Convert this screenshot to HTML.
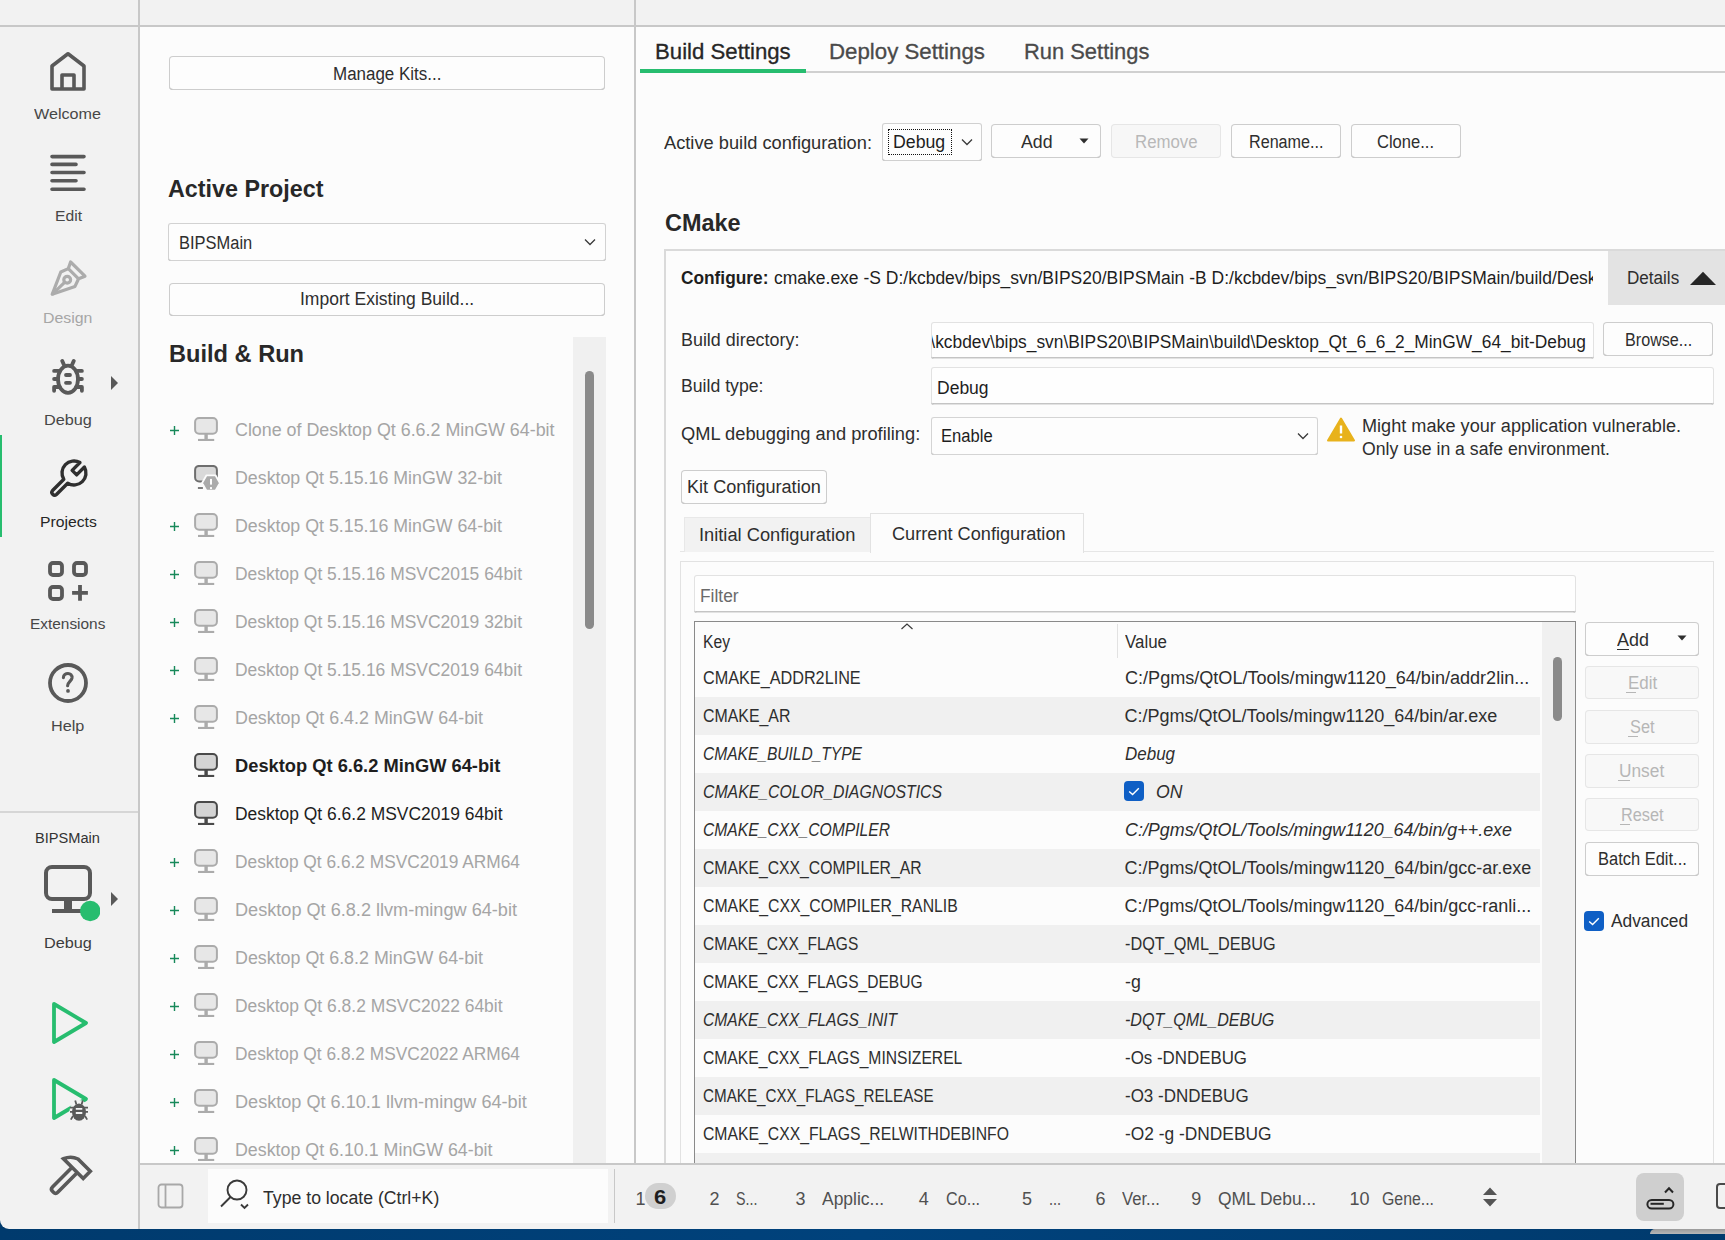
<!DOCTYPE html><html><head><meta charset="utf-8"><style>
html,body{margin:0;padding:0;width:1725px;height:1240px;overflow:hidden;background:#f2f2f2;font-family:"Liberation Sans", sans-serif;}
.t{position:absolute;white-space:pre;line-height:1;}
.r{position:absolute;box-sizing:border-box;}
</style></head><body>
<div class="r" style="left:0px;top:0px;width:1725px;height:1240px;background:#f2f2f2;"></div>
<div class="r" style="left:140px;top:27px;width:494px;height:1136px;background:#fcfcfc;"></div>
<div class="r" style="left:636px;top:27px;width:1089px;height:1136px;background:#fcfcfc;"></div>
<div class="r" style="left:0px;top:25px;width:1725px;height:2px;background:#c8c8c8;"></div>
<div class="r" style="left:138px;top:0px;width:2px;height:1229px;background:#c8c8c8;"></div>
<div class="r" style="left:634px;top:0px;width:2px;height:1163px;background:#c8c8c8;"></div>
<div class="r" style="left:140px;top:1163px;width:1585px;height:2px;background:#c8c8c8;"></div>
<div class="r" style="left:0px;top:1229px;width:1725px;height:11px;background:linear-gradient(90deg,#003a6d,#00427c 50%,#003a6d);"></div>
<div class="r" style="left:0px;top:1218px;width:10px;height:11px;background:#003a6d;"></div>
<div class="r" style="left:0px;top:1210px;width:10px;height:19px;background:#f2f2f2;border-bottom-left-radius:9px;"></div>
<div class="r" style="left:0px;top:811px;width:138px;height:2px;background:#d6d6d6;"></div>
<div class="r" style="left:0px;top:435px;width:2px;height:102px;background:#27bd6f;"></div>
<svg class="r" style="left:40px;top:45px" width="56" height="56" viewBox="0 0 56 56"><g fill="none" stroke="#595959" stroke-width="3.6" stroke-linejoin="round"><path d="M12,21 L28,8.8 L44,21 V44 H12 Z"/><path d="M22,44 V30 H34 V44"/></g></svg>
<div class="t" style="left:34.30px;top:105.58px;font-size:15.5px;color:#474747;transform:scaleX(1.0415);transform-origin:0 0;">Welcome</div>
<svg class="r" style="left:40px;top:145px" width="56" height="56" viewBox="0 0 56 56"><g stroke="#595959" stroke-width="3.6" stroke-linecap="round"><path d="M12,11.6 H44 M12,19.4 H36 M12,27.5 H44 M12,35.7 H36 M12,44.2 H44"/></g></svg>
<div class="t" style="left:54.70px;top:208.38px;font-size:15.5px;color:#474747;transform:scaleX(1.0105);transform-origin:0 0;">Edit</div>
<svg class="r" style="left:40px;top:250px" width="56" height="56" viewBox="0 0 56 56"><g fill="none" stroke="#acacac" stroke-width="3.2" stroke-linejoin="round"><path d="M12.2,44.3 L20.8,22 L28.3,18.6 L30.6,12 L45,26.2 L38.6,28.8 L35,36.4 Z"/><path d="M28.3,18.6 L38.6,28.8"/><circle cx="27.2" cy="29.8" r="3.4"/><path d="M12.2,44.3 L24.6,32.4"/></g></svg>
<div class="t" style="left:43.40px;top:310.48px;font-size:15.5px;color:#a6a6a6;transform:scaleX(1.0238);transform-origin:0 0;">Design</div>
<svg class="r" style="left:40px;top:348px" width="56" height="56" viewBox="0 0 56 56"><g fill="none" stroke="#595959" stroke-width="3.8" stroke-linecap="round" stroke-linejoin="round"><ellipse cx="28" cy="31.2" rx="10" ry="13.6"/><path d="M26,27 H30 M26,34.8 H30"/><path d="M18.5,22.9 H14.1 M37.5,22.9 H41.9 M18,31 H14.1 M38,31 H41.9 M19.5,39 H14.1 V42.8 M36.5,39 H41.9 V42.8 M24.5,18 L22.2,12.9 M31.5,18 L33.8,12.9"/></g></svg>
<svg class="r" style="left:108px;top:374px" width="14" height="18" viewBox="0 0 14 18"><path d="M3,2 L10,9 L3,16 Z" fill="#595959"/></svg>
<div class="t" style="left:43.75px;top:412.48px;font-size:15.5px;color:#474747;transform:scaleX(1.0484);transform-origin:0 0;">Debug</div>
<svg class="r" style="left:40px;top:448px" width="56" height="56" viewBox="0 0 56 56"><path d="M39.93,14.57 L32.15,22.35 L36.65,26.85 L44.43,19.07 A12,12 0 0 1 27.68,35.2 L16.44,46.44 A2.75,2.75 0 0 1 12.56,42.56 L23.8,31.32 A12,12 0 0 1 39.93,14.57 Z" fill="none" stroke="#2f2f2f" stroke-width="3.4" stroke-linejoin="round"/></svg>
<div class="t" style="left:39.70px;top:514.18px;font-size:15.5px;color:#262626;transform:scaleX(1.0143);transform-origin:0 0;">Projects</div>
<svg class="r" style="left:40px;top:550px" width="56" height="56" viewBox="0 0 56 56"><g fill="none" stroke="#595959" stroke-width="3.8"><rect x="10" y="13" width="12" height="12" rx="3"/><rect x="34" y="13" width="12" height="12" rx="3"/><rect x="10" y="37" width="12" height="12" rx="3"/><path d="M40,35 V50.8 M32.1,42.9 H47.9"/></g></svg>
<div class="t" style="left:30.40px;top:616.18px;font-size:15.5px;color:#474747;transform:scaleX(0.9944);transform-origin:0 0;">Extensions</div>
<svg class="r" style="left:40px;top:655px" width="56" height="56" viewBox="0 0 56 56"><g fill="none" stroke="#595959" stroke-width="3.8" stroke-linecap="round"><circle cx="28" cy="28" r="18"/><path d="M23.4,22.6 C23.6,17.2 32.6,17 32,23 C31.6,26 27.6,27.2 27.6,30.8" stroke-width="3.1"/></g><circle cx="28" cy="35.9" r="1.9" fill="#595959"/></svg>
<div class="t" style="left:51.20px;top:718.28px;font-size:15.5px;color:#474747;transform:scaleX(1.0473);transform-origin:0 0;">Help</div>
<div class="t" style="left:35.30px;top:830.28px;font-size:15.5px;color:#333333;transform:scaleX(0.9431);transform-origin:0 0;">BIPSMain</div>
<svg class="r" style="left:36px;top:858px" width="64" height="64" viewBox="0 0 64 64"><g fill="none" stroke="#595959" stroke-width="4"><rect x="10" y="9" width="44" height="32" rx="6"/></g><rect x="28" y="40" width="8" height="13" fill="#595959"/><rect x="16" y="51" width="34" height="4" fill="#595959"/><circle cx="54.2" cy="53" r="10.2" fill="#27bd6f"/></svg>
<svg class="r" style="left:108px;top:890px" width="14" height="18" viewBox="0 0 14 18"><path d="M3,2 L10,9 L3,16 Z" fill="#595959"/></svg>
<div class="t" style="left:43.75px;top:934.58px;font-size:15.5px;color:#3c3c3c;transform:scaleX(1.0484);transform-origin:0 0;">Debug</div>
<svg class="r" style="left:40px;top:995px" width="56" height="56" viewBox="0 0 56 56"><path d="M14,9 L46,28 L14,47 Z" fill="none" stroke="#27bd6f" stroke-width="3.8" stroke-linejoin="round"/></svg>
<svg class="r" style="left:40px;top:1072px" width="56" height="56" viewBox="0 0 56 56"><path d="M14,8 L46,27 L14,46 Z" fill="none" stroke="#27bd6f" stroke-width="3.8" stroke-linejoin="round"/><ellipse cx="39" cy="39.6" rx="9.6" ry="11.6" fill="#f2f2f2"/><ellipse cx="39" cy="40.1" rx="7" ry="8.7" fill="#595959"/><g stroke="#595959" stroke-width="1.8" fill="none"><path d="M30,35.7 H48 M30,39.8 H48 M33,44 L30.8,47.6 M45,44 L47.2,47.6 M36.4,32.5 L35.2,28.5 M41.6,32.5 L42.8,28.5"/></g><path d="M35.8,36.9 H42.3 M35.8,41 H42.3" stroke="#f2f2f2" stroke-width="1.8"/></svg>
<svg class="r" style="left:40px;top:1148px" width="56" height="56" viewBox="0 0 56 56"><g fill="none" stroke="#595959" stroke-width="3.6" stroke-linejoin="miter"><path d="M23.55,10.75 Q31,7.6 38,11 L50.3,23.3 L43.2,30.4 Z"/><path d="M32.15,19.35 L12.5,39 Q10.35,41.15 12.5,43.3 L13.45,44.25 Q15.6,46.4 17.75,44.25 L37.4,24.6"/></g></svg>
<div class="r" style="left:169px;top:56px;width:436px;height:34px;background:#fdfdfd;box-shadow:inset 0 0 0 1px #cdcdcd, inset 0 -1px 0 0 #a9a9a9;border-radius:4px;"></div>
<div class="t" style="left:332.80px;top:64.66px;font-size:18px;color:#2e2e2e;transform:scaleX(0.9421);transform-origin:0 0;">Manage Kits...</div>
<div class="t" style="left:168.40px;top:177.08px;font-size:24px;color:#282828;font-weight:700;transform:scaleX(0.9714);transform-origin:0 0;">Active Project</div>
<div class="r" style="left:168px;top:223px;width:438px;height:38px;background:#fdfdfd;box-shadow:inset 0 0 0 1px #d2d2d2, inset 0 -1px 0 0 #a8a8a8;border-radius:3px;"></div>
<div class="t" style="left:178.70px;top:233.76px;font-size:18px;color:#2e2e2e;transform:scaleX(0.9145);transform-origin:0 0;">BIPSMain</div>
<svg class="r" style="left:582px;top:234px" width="16" height="16" viewBox="0 0 16 16"><path d="M3,5.5 L8,10.5 L13,5.5" fill="none" stroke="#3a3a3a" stroke-width="1.3"/></svg>
<div class="r" style="left:169px;top:283px;width:436px;height:33px;background:#fdfdfd;box-shadow:inset 0 0 0 1px #cdcdcd, inset 0 -1px 0 0 #a9a9a9;border-radius:4px;"></div>
<div class="t" style="left:299.90px;top:290.46px;font-size:18px;color:#2e2e2e;transform:scaleX(0.9728);transform-origin:0 0;">Import Existing Build...</div>
<div class="t" style="left:168.80px;top:342.48px;font-size:24px;color:#282828;font-weight:700;transform:scaleX(0.9832);transform-origin:0 0;">Build &amp; Run</div>
<div class="r" style="left:573px;top:337px;width:33px;height:826px;background:#f0f0f0;"></div>
<div class="r" style="left:585px;top:371px;width:9px;height:258px;background:#8a8a8a;border-radius:4.5px;"></div>
<svg class="r" style="left:169px;top:425px" width="11" height="11" viewBox="0 0 11 11"><path d="M5.5,1 V10 M1,5.5 H10" stroke="#17895a" stroke-width="1.4"/></svg>
<svg class="r" style="left:193px;top:417px" width="30" height="28" viewBox="0 0 30 28"><rect x="2.1" y="1.1" width="21.8" height="15.6" rx="4" fill="#e7e7e7" stroke="#ababab" stroke-width="2"/><rect x="11.4" y="16.6" width="3.4" height="5.4" fill="#ababab"/><rect x="5" y="21.9" width="16.2" height="2.1" fill="#ababab"/></svg>
<div class="t" style="left:234.50px;top:421.36px;font-size:18px;color:#a5a5a5;transform:scaleX(0.9918);transform-origin:0 0;">Clone of Desktop Qt 6.6.2 MinGW 64-bit</div>
<svg class="r" style="left:193px;top:465px" width="30" height="28" viewBox="0 0 30 28"><rect x="2.1" y="0.9" width="21.8" height="15.6" rx="4" fill="#d9d9d9" stroke="#6e6e6e" stroke-width="2"/><rect x="4.9" y="22.1" width="5" height="1.8" fill="#6e6e6e"/><path d="M13.5,10.3 L22.5,10.3 L26.9,18 L22.5,25.6 L13.5,25.6 L9.1,18 Z" fill="#ababab" stroke="#fcfcfc" stroke-width="1.8" stroke-linejoin="round"/><rect x="17" y="13.9" width="2" height="5.7" fill="#fcfcfc"/><rect x="17" y="22.1" width="2" height="2" fill="#fcfcfc"/></svg>
<div class="t" style="left:234.50px;top:469.36px;font-size:18px;color:#a5a5a5;transform:scaleX(0.9884);transform-origin:0 0;">Desktop Qt 5.15.16 MinGW 32-bit</div>
<svg class="r" style="left:169px;top:521px" width="11" height="11" viewBox="0 0 11 11"><path d="M5.5,1 V10 M1,5.5 H10" stroke="#17895a" stroke-width="1.4"/></svg>
<svg class="r" style="left:193px;top:513px" width="30" height="28" viewBox="0 0 30 28"><rect x="2.1" y="1.1" width="21.8" height="15.6" rx="4" fill="#e7e7e7" stroke="#ababab" stroke-width="2"/><rect x="11.4" y="16.6" width="3.4" height="5.4" fill="#ababab"/><rect x="5" y="21.9" width="16.2" height="2.1" fill="#ababab"/></svg>
<div class="t" style="left:234.50px;top:517.36px;font-size:18px;color:#a5a5a5;transform:scaleX(0.9884);transform-origin:0 0;">Desktop Qt 5.15.16 MinGW 64-bit</div>
<svg class="r" style="left:169px;top:569px" width="11" height="11" viewBox="0 0 11 11"><path d="M5.5,1 V10 M1,5.5 H10" stroke="#17895a" stroke-width="1.4"/></svg>
<svg class="r" style="left:193px;top:561px" width="30" height="28" viewBox="0 0 30 28"><rect x="2.1" y="1.1" width="21.8" height="15.6" rx="4" fill="#e7e7e7" stroke="#ababab" stroke-width="2"/><rect x="11.4" y="16.6" width="3.4" height="5.4" fill="#ababab"/><rect x="5" y="21.9" width="16.2" height="2.1" fill="#ababab"/></svg>
<div class="t" style="left:234.50px;top:565.36px;font-size:18px;color:#a5a5a5;transform:scaleX(0.9690);transform-origin:0 0;">Desktop Qt 5.15.16 MSVC2015 64bit</div>
<svg class="r" style="left:169px;top:617px" width="11" height="11" viewBox="0 0 11 11"><path d="M5.5,1 V10 M1,5.5 H10" stroke="#17895a" stroke-width="1.4"/></svg>
<svg class="r" style="left:193px;top:609px" width="30" height="28" viewBox="0 0 30 28"><rect x="2.1" y="1.1" width="21.8" height="15.6" rx="4" fill="#e7e7e7" stroke="#ababab" stroke-width="2"/><rect x="11.4" y="16.6" width="3.4" height="5.4" fill="#ababab"/><rect x="5" y="21.9" width="16.2" height="2.1" fill="#ababab"/></svg>
<div class="t" style="left:234.50px;top:613.36px;font-size:18px;color:#a5a5a5;transform:scaleX(0.9690);transform-origin:0 0;">Desktop Qt 5.15.16 MSVC2019 32bit</div>
<svg class="r" style="left:169px;top:665px" width="11" height="11" viewBox="0 0 11 11"><path d="M5.5,1 V10 M1,5.5 H10" stroke="#17895a" stroke-width="1.4"/></svg>
<svg class="r" style="left:193px;top:657px" width="30" height="28" viewBox="0 0 30 28"><rect x="2.1" y="1.1" width="21.8" height="15.6" rx="4" fill="#e7e7e7" stroke="#ababab" stroke-width="2"/><rect x="11.4" y="16.6" width="3.4" height="5.4" fill="#ababab"/><rect x="5" y="21.9" width="16.2" height="2.1" fill="#ababab"/></svg>
<div class="t" style="left:234.50px;top:661.36px;font-size:18px;color:#a5a5a5;transform:scaleX(0.9690);transform-origin:0 0;">Desktop Qt 5.15.16 MSVC2019 64bit</div>
<svg class="r" style="left:169px;top:713px" width="11" height="11" viewBox="0 0 11 11"><path d="M5.5,1 V10 M1,5.5 H10" stroke="#17895a" stroke-width="1.4"/></svg>
<svg class="r" style="left:193px;top:705px" width="30" height="28" viewBox="0 0 30 28"><rect x="2.1" y="1.1" width="21.8" height="15.6" rx="4" fill="#e7e7e7" stroke="#ababab" stroke-width="2"/><rect x="11.4" y="16.6" width="3.4" height="5.4" fill="#ababab"/><rect x="5" y="21.9" width="16.2" height="2.1" fill="#ababab"/></svg>
<div class="t" style="left:234.50px;top:709.36px;font-size:18px;color:#a5a5a5;transform:scaleX(0.9916);transform-origin:0 0;">Desktop Qt 6.4.2 MinGW 64-bit</div>
<svg class="r" style="left:193px;top:753px" width="30" height="28" viewBox="0 0 30 28"><rect x="2.1" y="1.1" width="21.8" height="15.6" rx="4" fill="#d4d4d4" stroke="#4a4a4a" stroke-width="2"/><rect x="11.4" y="16.6" width="3.4" height="5.4" fill="#4a4a4a"/><rect x="5" y="21.9" width="16.2" height="2.1" fill="#4a4a4a"/></svg>
<div class="t" style="left:234.50px;top:757.36px;font-size:18px;color:#1e1e1e;font-weight:700;transform:scaleX(1.0163);transform-origin:0 0;">Desktop Qt 6.6.2 MinGW 64-bit</div>
<svg class="r" style="left:193px;top:801px" width="30" height="28" viewBox="0 0 30 28"><rect x="2.1" y="1.1" width="21.8" height="15.6" rx="4" fill="#d4d4d4" stroke="#4a4a4a" stroke-width="2"/><rect x="11.4" y="16.6" width="3.4" height="5.4" fill="#4a4a4a"/><rect x="5" y="21.9" width="16.2" height="2.1" fill="#4a4a4a"/></svg>
<div class="t" style="left:234.50px;top:805.36px;font-size:18px;color:#1e1e1e;transform:scaleX(0.9687);transform-origin:0 0;">Desktop Qt 6.6.2 MSVC2019 64bit</div>
<svg class="r" style="left:169px;top:857px" width="11" height="11" viewBox="0 0 11 11"><path d="M5.5,1 V10 M1,5.5 H10" stroke="#17895a" stroke-width="1.4"/></svg>
<svg class="r" style="left:193px;top:849px" width="30" height="28" viewBox="0 0 30 28"><rect x="2.1" y="1.1" width="21.8" height="15.6" rx="4" fill="#e7e7e7" stroke="#ababab" stroke-width="2"/><rect x="11.4" y="16.6" width="3.4" height="5.4" fill="#ababab"/><rect x="5" y="21.9" width="16.2" height="2.1" fill="#ababab"/></svg>
<div class="t" style="left:234.50px;top:853.36px;font-size:18px;color:#a5a5a5;transform:scaleX(0.9623);transform-origin:0 0;">Desktop Qt 6.6.2 MSVC2019 ARM64</div>
<svg class="r" style="left:169px;top:905px" width="11" height="11" viewBox="0 0 11 11"><path d="M5.5,1 V10 M1,5.5 H10" stroke="#17895a" stroke-width="1.4"/></svg>
<svg class="r" style="left:193px;top:897px" width="30" height="28" viewBox="0 0 30 28"><rect x="2.1" y="1.1" width="21.8" height="15.6" rx="4" fill="#e7e7e7" stroke="#ababab" stroke-width="2"/><rect x="11.4" y="16.6" width="3.4" height="5.4" fill="#ababab"/><rect x="5" y="21.9" width="16.2" height="2.1" fill="#ababab"/></svg>
<div class="t" style="left:234.50px;top:901.36px;font-size:18px;color:#a5a5a5;transform:scaleX(1.0067);transform-origin:0 0;">Desktop Qt 6.8.2 llvm-mingw 64-bit</div>
<svg class="r" style="left:169px;top:953px" width="11" height="11" viewBox="0 0 11 11"><path d="M5.5,1 V10 M1,5.5 H10" stroke="#17895a" stroke-width="1.4"/></svg>
<svg class="r" style="left:193px;top:945px" width="30" height="28" viewBox="0 0 30 28"><rect x="2.1" y="1.1" width="21.8" height="15.6" rx="4" fill="#e7e7e7" stroke="#ababab" stroke-width="2"/><rect x="11.4" y="16.6" width="3.4" height="5.4" fill="#ababab"/><rect x="5" y="21.9" width="16.2" height="2.1" fill="#ababab"/></svg>
<div class="t" style="left:234.50px;top:949.36px;font-size:18px;color:#a5a5a5;transform:scaleX(0.9916);transform-origin:0 0;">Desktop Qt 6.8.2 MinGW 64-bit</div>
<svg class="r" style="left:169px;top:1001px" width="11" height="11" viewBox="0 0 11 11"><path d="M5.5,1 V10 M1,5.5 H10" stroke="#17895a" stroke-width="1.4"/></svg>
<svg class="r" style="left:193px;top:993px" width="30" height="28" viewBox="0 0 30 28"><rect x="2.1" y="1.1" width="21.8" height="15.6" rx="4" fill="#e7e7e7" stroke="#ababab" stroke-width="2"/><rect x="11.4" y="16.6" width="3.4" height="5.4" fill="#ababab"/><rect x="5" y="21.9" width="16.2" height="2.1" fill="#ababab"/></svg>
<div class="t" style="left:234.50px;top:997.36px;font-size:18px;color:#a5a5a5;transform:scaleX(0.9687);transform-origin:0 0;">Desktop Qt 6.8.2 MSVC2022 64bit</div>
<svg class="r" style="left:169px;top:1049px" width="11" height="11" viewBox="0 0 11 11"><path d="M5.5,1 V10 M1,5.5 H10" stroke="#17895a" stroke-width="1.4"/></svg>
<svg class="r" style="left:193px;top:1041px" width="30" height="28" viewBox="0 0 30 28"><rect x="2.1" y="1.1" width="21.8" height="15.6" rx="4" fill="#e7e7e7" stroke="#ababab" stroke-width="2"/><rect x="11.4" y="16.6" width="3.4" height="5.4" fill="#ababab"/><rect x="5" y="21.9" width="16.2" height="2.1" fill="#ababab"/></svg>
<div class="t" style="left:234.50px;top:1045.36px;font-size:18px;color:#a5a5a5;transform:scaleX(0.9623);transform-origin:0 0;">Desktop Qt 6.8.2 MSVC2022 ARM64</div>
<svg class="r" style="left:169px;top:1097px" width="11" height="11" viewBox="0 0 11 11"><path d="M5.5,1 V10 M1,5.5 H10" stroke="#17895a" stroke-width="1.4"/></svg>
<svg class="r" style="left:193px;top:1089px" width="30" height="28" viewBox="0 0 30 28"><rect x="2.1" y="1.1" width="21.8" height="15.6" rx="4" fill="#e7e7e7" stroke="#ababab" stroke-width="2"/><rect x="11.4" y="16.6" width="3.4" height="5.4" fill="#ababab"/><rect x="5" y="21.9" width="16.2" height="2.1" fill="#ababab"/></svg>
<div class="t" style="left:234.50px;top:1093.36px;font-size:18px;color:#a5a5a5;transform:scaleX(1.0055);transform-origin:0 0;">Desktop Qt 6.10.1 llvm-mingw 64-bit</div>
<svg class="r" style="left:169px;top:1145px" width="11" height="11" viewBox="0 0 11 11"><path d="M5.5,1 V10 M1,5.5 H10" stroke="#17895a" stroke-width="1.4"/></svg>
<svg class="r" style="left:193px;top:1137px" width="30" height="28" viewBox="0 0 30 28"><rect x="2.1" y="1.1" width="21.8" height="15.6" rx="4" fill="#e7e7e7" stroke="#ababab" stroke-width="2"/><rect x="11.4" y="16.6" width="3.4" height="5.4" fill="#ababab"/><rect x="5" y="21.9" width="16.2" height="2.1" fill="#ababab"/></svg>
<div class="t" style="left:234.50px;top:1141.36px;font-size:18px;color:#a5a5a5;transform:scaleX(0.9900);transform-origin:0 0;">Desktop Qt 6.10.1 MinGW 64-bit</div>
<div class="r" style="left:140px;top:1165px;width:1585px;height:64px;background:#f2f2f2;"></div>
<svg class="r" style="left:156px;top:1182px" width="30" height="28" viewBox="0 0 30 28"><rect x="2.5" y="2.5" width="24" height="23" rx="3" fill="none" stroke="#a8a8a8" stroke-width="1.8"/><path d="M9.5,2.5 V25.5" stroke="#a8a8a8" stroke-width="1.8"/></svg>
<div class="r" style="left:208px;top:1169px;width:400px;height:54px;background:#fcfcfc;"></div>
<svg class="r" style="left:218px;top:1178px" width="36" height="36" viewBox="0 0 36 36"><g fill="none" stroke="#3a3a3a" stroke-width="1.9"><circle cx="19" cy="12" r="9.5"/><path d="M12.5,19 L3,28.5"/><path d="M23,26.5 L26.5,30 L30,26.5"/></g></svg>
<div class="t" style="left:262.70px;top:1189.16px;font-size:18px;color:#2e2e2e;transform:scaleX(0.9817);transform-origin:0 0;">Type to locate (Ctrl+K)</div>
<div class="r" style="left:614px;top:1169px;width:1px;height:54px;background:#c8c8c8;"></div>
<div class="t" style="left:635.40px;top:1189.56px;font-size:18px;color:#505050;">1</div>
<div class="r" style="left:645px;top:1183px;width:31px;height:26px;background:#d0d0d0;border-radius:13px;"></div>
<div class="t" style="left:654.10px;top:1187.27px;font-size:20px;color:#1e1e1e;font-weight:700;transform:scaleX(1.0966);transform-origin:0 0;">6</div>
<div class="t" style="left:709.50px;top:1189.56px;font-size:18px;color:#505050;">2</div>
<div class="t" style="left:736.30px;top:1189.56px;font-size:18px;color:#505050;transform:scaleX(0.7921);transform-origin:0 0;">S...</div>
<div class="t" style="left:795.40px;top:1189.56px;font-size:18px;color:#505050;">3</div>
<div class="t" style="left:822.20px;top:1189.56px;font-size:18px;color:#505050;transform:scaleX(0.9698);transform-origin:0 0;">Applic...</div>
<div class="t" style="left:918.80px;top:1189.56px;font-size:18px;color:#505050;">4</div>
<div class="t" style="left:946.00px;top:1189.56px;font-size:18px;color:#505050;transform:scaleX(0.8970);transform-origin:0 0;">Co...</div>
<div class="t" style="left:1021.90px;top:1189.56px;font-size:18px;color:#505050;">5</div>
<div class="t" style="left:1048.50px;top:1189.56px;font-size:18px;color:#505050;transform:scaleX(0.8058);transform-origin:0 0;">...</div>
<div class="t" style="left:1095.50px;top:1189.56px;font-size:18px;color:#505050;">6</div>
<div class="t" style="left:1122.20px;top:1189.56px;font-size:18px;color:#505050;transform:scaleX(0.9237);transform-origin:0 0;">Ver...</div>
<div class="t" style="left:1191.30px;top:1189.56px;font-size:18px;color:#505050;">9</div>
<div class="t" style="left:1218.00px;top:1189.56px;font-size:18px;color:#505050;transform:scaleX(0.9677);transform-origin:0 0;">QML Debu...</div>
<div class="t" style="left:1349.40px;top:1189.56px;font-size:18px;color:#505050;">10</div>
<div class="t" style="left:1382.30px;top:1189.56px;font-size:18px;color:#505050;transform:scaleX(0.8807);transform-origin:0 0;">Gene...</div>
<svg class="r" style="left:1480px;top:1185px" width="20" height="24" viewBox="0 0 20 24"><path d="M3,10 L10,2.5 L17,10 Z M3,14 L10,21.5 L17,14 Z" fill="#555"/></svg>
<div class="r" style="left:1636px;top:1173px;width:48px;height:48px;background:#cfcfcf;border-radius:8px;"></div>
<svg class="r" style="left:1640px;top:1177px" width="40" height="40" viewBox="0 0 40 40"><g fill="none" stroke="#262626" stroke-width="2"><rect x="7.4" y="23" width="26" height="8.6" rx="4.3"/><path d="M25,15.5 L29,11.2 L33,15.5"/></g><path d="M10.5,26.8 H23.8" stroke="#262626" stroke-width="2"/></svg>
<div class="r" style="left:1650px;top:1229px;width:75px;height:5px;background:linear-gradient(180deg,#9a9a9a,#b8b8b8);border-top-left-radius:5px;"></div>
<div class="r" style="left:1716px;top:1183px;width:14px;height:26px;box-shadow:inset 0 0 0 1px #4a4a4a;border-radius:4px;box-shadow:inset 0 0 0 2px #4a4a4a;"></div>
<div class="t" style="left:655.00px;top:40.58px;font-size:22px;color:#262626;transform:scaleX(1.0087);transform-origin:0 0;-webkit-text-stroke:0.3px currentColor;">Build Settings</div>
<div class="t" style="left:829.30px;top:40.58px;font-size:22px;color:#4a4a4a;transform:scaleX(1.0117);transform-origin:0 0;-webkit-text-stroke:0.3px currentColor;">Deploy Settings</div>
<div class="t" style="left:1023.50px;top:40.58px;font-size:22px;color:#4a4a4a;transform:scaleX(0.9955);transform-origin:0 0;-webkit-text-stroke:0.3px currentColor;">Run Settings</div>
<div class="r" style="left:806px;top:71px;width:919px;height:2px;background:#d0d0d0;"></div>
<div class="r" style="left:640px;top:69px;width:166px;height:4px;background:#27bd6f;"></div>
<div class="t" style="left:664.00px;top:134.36px;font-size:18px;color:#2e2e2e;transform:scaleX(1.0140);transform-origin:0 0;">Active build configuration:</div>
<div class="r" style="left:882px;top:123px;width:100px;height:38px;background:#fdfdfd;box-shadow:inset 0 0 0 1px #d0d0d0, inset 0 -1px 0 0 #a8a8a8;border-radius:3px;"></div>
<div class="r" style="left:888px;top:129px;width:64px;height:26px;border:1px dotted #111;"></div>
<div class="t" style="left:892.50px;top:133.16px;font-size:18px;color:#1e1e1e;transform:scaleX(0.9840);transform-origin:0 0;">Debug</div>
<svg class="r" style="left:959px;top:134px" width="16" height="16" viewBox="0 0 16 16"><path d="M3,5.5 L8,10.5 L13,5.5" fill="none" stroke="#3a3a3a" stroke-width="1.3"/></svg>
<div class="r" style="left:991px;top:124px;width:110px;height:34px;background:#fdfdfd;box-shadow:inset 0 0 0 1px #cdcdcd, inset 0 -1px 0 0 #a9a9a9;border-radius:4px;"></div>
<div class="t" style="left:1020.90px;top:132.76px;font-size:18px;color:#2e2e2e;transform:scaleX(0.9865);transform-origin:0 0;">Add</div>
<svg class="r" style="left:1077px;top:135px" width="14" height="12" viewBox="0 0 14 12"><path d="M2.5,3.5 L11.5,3.5 L7,8.5 Z" fill="#2e2e2e"/></svg>
<div class="r" style="left:1111px;top:124px;width:110px;height:34px;background:#f7f7f7;box-shadow:inset 0 0 0 1px #e6e6e6;border-radius:4px;"></div>
<div class="t" style="left:1134.80px;top:132.76px;font-size:18px;color:#b8b8b8;transform:scaleX(0.9339);transform-origin:0 0;">Remove</div>
<div class="r" style="left:1231px;top:124px;width:110px;height:34px;background:#fdfdfd;box-shadow:inset 0 0 0 1px #cdcdcd, inset 0 -1px 0 0 #a9a9a9;border-radius:4px;"></div>
<div class="t" style="left:1249.00px;top:132.76px;font-size:18px;color:#2e2e2e;transform:scaleX(0.8971);transform-origin:0 0;">Rename...</div>
<div class="r" style="left:1351px;top:124px;width:110px;height:34px;background:#fdfdfd;box-shadow:inset 0 0 0 1px #cdcdcd, inset 0 -1px 0 0 #a9a9a9;border-radius:4px;"></div>
<div class="t" style="left:1377.40px;top:132.76px;font-size:18px;color:#2e2e2e;transform:scaleX(0.9187);transform-origin:0 0;">Clone...</div>
<div class="t" style="left:664.60px;top:212.03px;font-size:23px;color:#282828;font-weight:700;transform:scaleX(1.0195);transform-origin:0 0;">CMake</div>
<div class="r" style="left:664px;top:249px;width:1061px;height:914px;border-left:2px solid #dadada;border-top:2px solid #dadada;"></div>
<div class="r" style="left:1608px;top:251px;width:117px;height:54px;background:#e3e3e3;"></div>
<div class="t" style="left:1627.00px;top:268.66px;font-size:18px;color:#2e2e2e;transform:scaleX(0.9486);transform-origin:0 0;">Details</div>
<svg class="r" style="left:1688px;top:269px" width="30" height="18" viewBox="0 0 30 18"><path d="M2,16 L15,2.8 L28,16 Z" fill="#262626"/></svg>
<div class="r" style="left:680px;top:255px;width:913px;height:40px;overflow:hidden">
<div class="t" style="left:0.70px;top:14.26px;font-size:18px;color:#1e1e1e;font-weight:700;transform:scaleX(0.9606);transform-origin:0 0;">Configure:</div>
<div class="t" style="left:94.40px;top:14.26px;font-size:18px;color:#1e1e1e;transform:scaleX(0.9719);transform-origin:0 0;">cmake.exe -S D:/kcbdev/bips_svn/BIPS20/BIPSMain -B D:/kcbdev/bips_svn/BIPS20/BIPSMain/build/Desk</div>
</div>
<div class="t" style="left:680.70px;top:330.96px;font-size:18px;color:#2e2e2e;transform:scaleX(0.9944);transform-origin:0 0;">Build directory:</div>
<div class="r" style="left:931px;top:322px;width:663px;height:37px;background:#fefefe;box-shadow:inset 0 0 0 1px #e2e2e2, inset 0 -1.5px 0 0 #8a8a8a;border-radius:3px;"></div>
<div class="r" style="left:932px;top:322px;width:661px;height:36px;overflow:hidden">
<div class="t" style="left:-19.30px;top:10.86px;font-size:18px;color:#1e1e1e;transform:scaleX(0.9635);transform-origin:0 0;">D:\kcbdev\bips_svn\BIPS20\BIPSMain\build\Desktop_Qt_6_6_2_MinGW_64_bit-Debug</div>
</div>
<div class="r" style="left:1603px;top:322px;width:110px;height:34px;background:#fdfdfd;box-shadow:inset 0 0 0 1px #cdcdcd, inset 0 -1px 0 0 #a9a9a9;border-radius:4px;"></div>
<div class="t" style="left:1624.50px;top:330.56px;font-size:18px;color:#2e2e2e;transform:scaleX(0.8970);transform-origin:0 0;">Browse...</div>
<div class="t" style="left:680.70px;top:376.76px;font-size:18px;color:#2e2e2e;transform:scaleX(0.9814);transform-origin:0 0;">Build type:</div>
<div class="r" style="left:931px;top:367px;width:783px;height:38px;background:#fefefe;box-shadow:inset 0 0 0 1px #e2e2e2, inset 0 -1.5px 0 0 #8a8a8a;border-radius:3px;"></div>
<div class="t" style="left:936.90px;top:378.51px;font-size:18px;color:#1e1e1e;transform:scaleX(0.9727);transform-origin:0 0;">Debug</div>
<div class="t" style="left:680.60px;top:424.76px;font-size:18px;color:#2e2e2e;transform:scaleX(1.0161);transform-origin:0 0;">QML debugging and profiling:</div>
<div class="r" style="left:931px;top:417px;width:387px;height:38px;background:#fdfdfd;box-shadow:inset 0 0 0 1px #d4d4d4, inset 0 -1px 0 0 #a8a8a8;border-radius:3px;"></div>
<div class="t" style="left:940.60px;top:427.26px;font-size:18px;color:#1e1e1e;transform:scaleX(0.9222);transform-origin:0 0;">Enable</div>
<svg class="r" style="left:1295px;top:428px" width="16" height="16" viewBox="0 0 16 16"><path d="M3,5.5 L8,10.5 L13,5.5" fill="none" stroke="#3a3a3a" stroke-width="1.3"/></svg>
<svg class="r" style="left:1326px;top:416px" width="30" height="27" viewBox="0 0 30 27"><path d="M15,2.5 L28,24.5 L2,24.5 Z" fill="#e8b21c" stroke="#e8b21c" stroke-width="2" stroke-linejoin="round"/><path d="M15,9.5 V17.5" stroke="#fff" stroke-width="2.4"/><circle cx="15" cy="21" r="1.3" fill="#fff"/></svg>
<div class="t" style="left:1362.40px;top:417.16px;font-size:18px;color:#2e2e2e;transform:scaleX(1.0058);transform-origin:0 0;">Might make your application vulnerable.</div>
<div class="t" style="left:1362.40px;top:440.26px;font-size:18px;color:#2e2e2e;transform:scaleX(0.9797);transform-origin:0 0;">Only use in a safe environment.</div>
<div class="r" style="left:681px;top:470px;width:146px;height:34px;background:#fdfdfd;box-shadow:inset 0 0 0 1px #cdcdcd, inset 0 -1px 0 0 #a9a9a9;border-radius:4px;"></div>
<div class="t" style="left:687.00px;top:478.46px;font-size:18px;color:#2e2e2e;transform:scaleX(1.0054);transform-origin:0 0;">Kit Configuration</div>
<div class="r" style="left:680px;top:551px;width:1034px;height:1px;background:#e6e6e6;"></div>
<div class="r" style="left:684px;top:517px;width:187px;height:35px;background:#f2f2f2;box-shadow:inset 1px 0 0 0 #e8e8e8, inset 0 1px 0 0 #e8e8e8;"></div>
<div class="t" style="left:698.70px;top:525.76px;font-size:18px;color:#2e2e2e;transform:scaleX(1.0143);transform-origin:0 0;">Initial Configuration</div>
<div class="r" style="left:870px;top:513px;width:214px;height:40px;background:#fcfcfc;box-shadow:inset 1px 0 0 0 #e2e2e2, inset -1px 0 0 0 #e2e2e2, inset 0 1px 0 0 #e2e2e2;"></div>
<div class="t" style="left:892.40px;top:525.06px;font-size:18px;color:#2e2e2e;transform:scaleX(1.0088);transform-origin:0 0;">Current Configuration</div>
<div class="r" style="left:680px;top:561px;width:1034px;height:602px;background:#fcfcfc;box-shadow:inset 1px 0 0 0 #e2e2e2, inset -1px 0 0 0 #e2e2e2, inset 0 1px 0 0 #e2e2e2;"></div>
<div class="r" style="left:694px;top:575px;width:882px;height:38px;background:#fefefe;box-shadow:inset 0 0 0 1px #e2e2e2, inset 0 -1.5px 0 0 #8a8a8a;border-radius:3px;"></div>
<div class="t" style="left:700.40px;top:586.86px;font-size:18px;color:#6a6a6a;transform:scaleX(0.9650);transform-origin:0 0;">Filter</div>
<div class="r" style="left:694px;top:621px;width:882px;height:542px;background:#fcfcfc;box-shadow:inset 1px 0 0 0 #8a8a8a, inset 0 1px 0 0 #8a8a8a, inset -1px 0 0 0 #8a8a8a;"></div>
<div class="r" style="left:1541.5px;top:622px;width:33.5px;height:541px;background:#f0f0f0;"></div>
<div class="r" style="left:1553px;top:657px;width:9px;height:64px;background:#8a8a8a;border-radius:4.5px;"></div>
<div class="r" style="left:1117px;top:624px;width:1px;height:34px;background:#e2e2e2;"></div>
<svg class="r" style="left:899px;top:620px" width="16" height="12" viewBox="0 0 16 12"><path d="M2.5,9 L8,4 L13.5,9" fill="none" stroke="#3a3a3a" stroke-width="1.2"/></svg>
<div class="t" style="left:702.60px;top:632.96px;font-size:18px;color:#2e2e2e;transform:scaleX(0.8701);transform-origin:0 0;">Key</div>
<div class="t" style="left:1124.50px;top:632.96px;font-size:18px;color:#2e2e2e;transform:scaleX(0.9395);transform-origin:0 0;">Value</div>
<div class="r" style="left:695px;top:659px;width:845px;height:38px;background:#fcfcfc;"></div>
<div class="t" style="left:702.60px;top:668.76px;font-size:18px;color:#2e2e2e;transform:scaleX(0.9008);transform-origin:0 0;">CMAKE_ADDR2LINE</div>
<div class="t" style="left:1124.50px;top:668.76px;font-size:18px;color:#2e2e2e;transform:scaleX(1.0035);transform-origin:0 0;">C:/Pgms/QtOL/Tools/mingw1120_64/bin/addr2lin...</div>
<div class="r" style="left:695px;top:697px;width:845px;height:38px;background:#f0f0f0;"></div>
<div class="t" style="left:702.60px;top:706.76px;font-size:18px;color:#2e2e2e;transform:scaleX(0.8825);transform-origin:0 0;">CMAKE_AR</div>
<div class="t" style="left:1124.50px;top:706.76px;font-size:18px;color:#2e2e2e;">C:/Pgms/QtOL/Tools/mingw1120_64/bin/ar.exe</div>
<div class="r" style="left:695px;top:735px;width:845px;height:38px;background:#fcfcfc;"></div>
<div class="t" style="left:702.60px;top:744.76px;font-size:18px;color:#2e2e2e;font-style:italic;transform:scaleX(0.8633);transform-origin:0 0;">CMAKE_BUILD_TYPE</div>
<div class="t" style="left:1124.50px;top:744.76px;font-size:18px;color:#2e2e2e;font-style:italic;transform:scaleX(0.9426);transform-origin:0 0;">Debug</div>
<div class="r" style="left:695px;top:773px;width:845px;height:38px;background:#f0f0f0;"></div>
<div class="t" style="left:702.60px;top:782.76px;font-size:18px;color:#2e2e2e;font-style:italic;transform:scaleX(0.8785);transform-origin:0 0;">CMAKE_COLOR_DIAGNOSTICS</div>
<div class="r" style="left:1124px;top:781px;width:20px;height:20px;background:#0f5fc5;border-radius:4px;"></div>
<svg class="r" style="left:1124px;top:781px" width="20" height="20" viewBox="0 0 20 20"><path d="M5.2,10.4 L8.6,13.6 L14.8,7.2" fill="none" stroke="#fff" stroke-width="1.4"/></svg>
<div class="t" style="left:1156.20px;top:782.76px;font-size:18px;color:#2e2e2e;font-style:italic;transform:scaleX(0.9778);transform-origin:0 0;">ON</div>
<div class="r" style="left:695px;top:811px;width:845px;height:38px;background:#fcfcfc;"></div>
<div class="t" style="left:702.60px;top:820.76px;font-size:18px;color:#2e2e2e;font-style:italic;transform:scaleX(0.8695);transform-origin:0 0;">CMAKE_CXX_COMPILER</div>
<div class="t" style="left:1124.50px;top:820.76px;font-size:18px;color:#2e2e2e;font-style:italic;transform:scaleX(0.9943);transform-origin:0 0;">C:/Pgms/QtOL/Tools/mingw1120_64/bin/g++.exe</div>
<div class="r" style="left:695px;top:849px;width:845px;height:38px;background:#f0f0f0;"></div>
<div class="t" style="left:702.60px;top:858.76px;font-size:18px;color:#2e2e2e;transform:scaleX(0.8741);transform-origin:0 0;">CMAKE_CXX_COMPILER_AR</div>
<div class="t" style="left:1124.50px;top:858.76px;font-size:18px;color:#2e2e2e;">C:/Pgms/QtOL/Tools/mingw1120_64/bin/gcc-ar.exe</div>
<div class="r" style="left:695px;top:887px;width:845px;height:38px;background:#fcfcfc;"></div>
<div class="t" style="left:702.60px;top:896.76px;font-size:18px;color:#2e2e2e;transform:scaleX(0.8783);transform-origin:0 0;">CMAKE_CXX_COMPILER_RANLIB</div>
<div class="t" style="left:1124.50px;top:896.76px;font-size:18px;color:#2e2e2e;">C:/Pgms/QtOL/Tools/mingw1120_64/bin/gcc-ranli...</div>
<div class="r" style="left:695px;top:925px;width:845px;height:38px;background:#f0f0f0;"></div>
<div class="t" style="left:702.60px;top:934.76px;font-size:18px;color:#2e2e2e;transform:scaleX(0.8625);transform-origin:0 0;">CMAKE_CXX_FLAGS</div>
<div class="t" style="left:1124.50px;top:934.76px;font-size:18px;color:#2e2e2e;transform:scaleX(0.9022);transform-origin:0 0;">-DQT_QML_DEBUG</div>
<div class="r" style="left:695px;top:963px;width:845px;height:38px;background:#fcfcfc;"></div>
<div class="t" style="left:702.60px;top:972.76px;font-size:18px;color:#2e2e2e;transform:scaleX(0.8639);transform-origin:0 0;">CMAKE_CXX_FLAGS_DEBUG</div>
<div class="t" style="left:1124.50px;top:972.76px;font-size:18px;color:#2e2e2e;transform:scaleX(0.9865);transform-origin:0 0;">-g</div>
<div class="r" style="left:695px;top:1001px;width:845px;height:38px;background:#f0f0f0;"></div>
<div class="t" style="left:702.60px;top:1010.76px;font-size:18px;color:#2e2e2e;font-style:italic;transform:scaleX(0.8658);transform-origin:0 0;">CMAKE_CXX_FLAGS_INIT</div>
<div class="t" style="left:1124.50px;top:1010.76px;font-size:18px;color:#2e2e2e;font-style:italic;transform:scaleX(0.8944);transform-origin:0 0;">-DQT_QML_DEBUG</div>
<div class="r" style="left:695px;top:1039px;width:845px;height:38px;background:#fcfcfc;"></div>
<div class="t" style="left:702.60px;top:1048.76px;font-size:18px;color:#2e2e2e;transform:scaleX(0.8699);transform-origin:0 0;">CMAKE_CXX_FLAGS_MINSIZEREL</div>
<div class="t" style="left:1124.50px;top:1048.76px;font-size:18px;color:#2e2e2e;transform:scaleX(0.9385);transform-origin:0 0;">-Os -DNDEBUG</div>
<div class="r" style="left:695px;top:1077px;width:845px;height:38px;background:#f0f0f0;"></div>
<div class="t" style="left:702.60px;top:1086.76px;font-size:18px;color:#2e2e2e;transform:scaleX(0.8443);transform-origin:0 0;">CMAKE_CXX_FLAGS_RELEASE</div>
<div class="t" style="left:1124.50px;top:1086.76px;font-size:18px;color:#2e2e2e;transform:scaleX(0.9434);transform-origin:0 0;">-O3 -DNDEBUG</div>
<div class="r" style="left:695px;top:1115px;width:845px;height:38px;background:#fcfcfc;"></div>
<div class="t" style="left:702.60px;top:1124.76px;font-size:18px;color:#2e2e2e;transform:scaleX(0.8749);transform-origin:0 0;">CMAKE_CXX_FLAGS_RELWITHDEBINFO</div>
<div class="t" style="left:1124.50px;top:1124.76px;font-size:18px;color:#2e2e2e;transform:scaleX(0.9637);transform-origin:0 0;">-O2 -g -DNDEBUG</div>
<div class="r" style="left:695px;top:1153px;width:845px;height:10px;background:#f0f0f0;"></div>
<div class="r" style="left:1585px;top:622px;width:114px;height:34px;background:#fdfdfd;box-shadow:inset 0 0 0 1px #cdcdcd, inset 0 -1px 0 0 #a9a9a9;border-radius:4px;"></div>
<div class="t" style="left:1616.50px;top:630.76px;font-size:18px;color:#2e2e2e;transform:scaleX(0.9959);transform-origin:0 0;">Add</div>
<div class="r" style="left:1616.5px;top:648.6px;width:12px;height:1px;background:#2e2e2e;"></div>
<svg class="r" style="left:1675px;top:632px" width="14" height="12" viewBox="0 0 14 12"><path d="M2.5,3.5 L11.5,3.5 L7,8.5 Z" fill="#2e2e2e"/></svg>
<div class="r" style="left:1585px;top:666px;width:114px;height:33px;background:#f8f8f8;box-shadow:inset 0 0 0 1px #e6e6e6;border-radius:4px;"></div>
<div class="t" style="left:1627.60px;top:674.26px;font-size:18px;color:#b6b6b6;transform:scaleX(0.9410);transform-origin:0 0;">Edit</div>
<div class="r" style="left:1626px;top:692.1px;width:10px;height:1px;background:#b6b6b6;"></div>
<div class="r" style="left:1585px;top:710px;width:114px;height:34px;background:#f8f8f8;box-shadow:inset 0 0 0 1px #e6e6e6;border-radius:4px;"></div>
<div class="t" style="left:1630.00px;top:718.46px;font-size:18px;color:#b6b6b6;transform:scaleX(0.9064);transform-origin:0 0;">Set</div>
<div class="r" style="left:1628px;top:736.3000000000001px;width:10px;height:1px;background:#b6b6b6;"></div>
<div class="r" style="left:1585px;top:754px;width:114px;height:34px;background:#f8f8f8;box-shadow:inset 0 0 0 1px #e6e6e6;border-radius:4px;"></div>
<div class="t" style="left:1619.40px;top:762.36px;font-size:18px;color:#b6b6b6;transform:scaleX(0.9611);transform-origin:0 0;">Unset</div>
<div class="r" style="left:1618px;top:780.2px;width:11.5px;height:1px;background:#b6b6b6;"></div>
<div class="r" style="left:1585px;top:798px;width:114px;height:33px;background:#f8f8f8;box-shadow:inset 0 0 0 1px #e6e6e6;border-radius:4px;"></div>
<div class="t" style="left:1621.00px;top:805.96px;font-size:18px;color:#b6b6b6;transform:scaleX(0.9058);transform-origin:0 0;">Reset</div>
<div class="r" style="left:1620px;top:823.8000000000001px;width:10px;height:1px;background:#b6b6b6;"></div>
<div class="r" style="left:1585px;top:842px;width:114px;height:34px;background:#fdfdfd;box-shadow:inset 0 0 0 1px #cdcdcd, inset 0 -1px 0 0 #a9a9a9;border-radius:4px;"></div>
<div class="t" style="left:1597.70px;top:849.96px;font-size:18px;color:#2e2e2e;transform:scaleX(0.9149);transform-origin:0 0;">Batch Edit...</div>
<div class="r" style="left:1584px;top:911px;width:20px;height:20px;background:#0f5fc5;border-radius:4px;"></div>
<svg class="r" style="left:1584px;top:911px" width="20" height="20" viewBox="0 0 20 20"><path d="M5.2,10.4 L8.6,13.6 L14.8,7.2" fill="none" stroke="#fff" stroke-width="1.4"/></svg>
<div class="t" style="left:1610.50px;top:912.46px;font-size:18px;color:#2e2e2e;transform:scaleX(0.9630);transform-origin:0 0;">Advanced</div>
</body></html>
